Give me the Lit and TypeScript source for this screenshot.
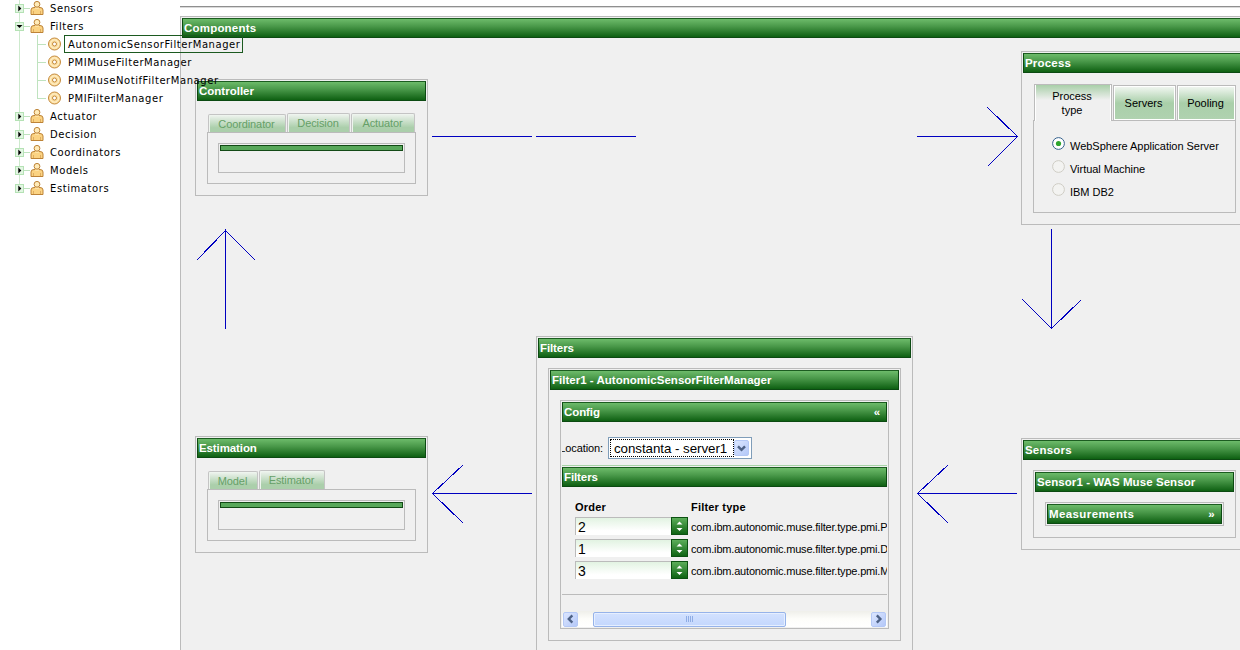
import { LitElement, html, css, svg, nothing } from "lit";
import { customElement, property } from "lit/decorators.js";
import { classMap } from "lit/directives/class-map.js";

const chevron = (dir: string) => {
  const d: Record<string, string> = {
    down: "M3.2 5.2 L7 9 L10.8 5.2",
    left: "M9 3.2 L5.2 7 L9 10.8",
    right: "M5.2 3.2 L9 7 L5.2 10.8",
  };
  return html`<svg width="14" height="14" viewBox="0 0 14 14"><path d=${d[dir]} fill="none" stroke="#4d6185" stroke-width="2.6"/></svg>`;
};

const person = html`<svg class="icon" width="14" height="16" viewBox="0 0 14 16">
  <path d="M1 14.5 V10 Q1 7.5 4 7.5 H10 Q13 7.5 13 10 V14.5 Z" fill="#fbd383" stroke="#bd8337"/>
  <path d="M3.5 14 V11 M10.5 14 V11" stroke="#e0ad60"/>
  <path d="M5.2 6.5 H8.8 V9 H5.2 Z" fill="#ffe4a6"/>
  <circle cx="7" cy="4.3" r="2.9" fill="#ffebb9" stroke="#bd8337"/>
</svg>`;

const ring = html`<svg class="icon" width="14" height="14" viewBox="0 0 14 14">
  <circle cx="7" cy="7" r="6" fill="#fde0a2" stroke="#c48a3c"/>
  <circle cx="7" cy="7" r="4.2" fill="none" stroke="#fff0cc"/>
  <circle cx="7" cy="7" r="2" fill="#fff" stroke="#c48a3c"/>
</svg>`;

@customElement("ui-panel")
export class UiPanel extends LitElement {
  @property() heading = "";
  @property() mark = "";
  static styles = css`
    :host { display: flex; flex-direction: column; box-sizing: border-box; border: 1px solid #bbb; padding: 1px; background: #f0f0f0; }
    .head {
      display: flex; align-items: center; justify-content: space-between; flex: none;
      box-sizing: border-box; height: 20px; padding: 0 6px 0 1px;
      border: 1px solid #0c4a12; border-top-color: #1c5c20;
      background: linear-gradient(#6dbb6a, #4a994a 40%, #0e6012);
      color: #fff; font: bold 11.5px/18px "Liberation Sans", Arial, sans-serif; white-space: nowrap;
      letter-spacing: var(--head-spacing, -0.1px);
    }
    .body { flex: 1; min-height: 0; display: flex; flex-direction: column; padding: var(--body-pad, 10px); }
  `;
  render() {
    return html`<div class="head"><span>${this.heading}</span>${this.mark ? html`<span>${this.mark}</span>` : nothing}</div>
      <div class="body"><slot></slot></div>`;
  }
}

@customElement("ui-tabs")
export class UiTabs extends LitElement {
  @property({ attribute: false }) tabs: { label: string; width: number }[] = [];
  static styles = css`
    :host { display: flex; flex-direction: column; flex: 1; font: 11px/13px "Liberation Sans", Arial, sans-serif; }
    .strip { display: flex; align-items: flex-end; gap: 1px; padding-left: 1px; height: 21px; }
    .tab {
      box-sizing: border-box; height: 19px; border: 1px solid #c4c4c4; border-bottom: 0; border-radius: 2px 2px 0 0;
      background: linear-gradient(#f0f4f0, #abcfab 75%); box-shadow: inset 1px 1px #eef4ee;
      text-align: center; color: #65a067; line-height: 18px; letter-spacing: -0.1px; padding-right: 1px;
    }
    .tab.first { height: 18px; }
    .page { flex: 1; border: 1px solid #bbb; padding: 10px; }
    .box { border: 1px solid #bbb; padding: 1px; height: 26px; }
    .bar { height: 4px; border: 1px solid #134a16; background: #58a85a; }
  `;
  render() {
    return html`<div class="strip">
        ${this.tabs.map((t, i) => html`<div class=${classMap({ tab: true, first: i === 0 })} style="width:${t.width}px">${t.label}</div>`)}
      </div>
      <div class="page"><div class="box"><div class="bar"></div></div></div>`;
  }
}

@customElement("process-tabs")
export class ProcessTabs extends LitElement {
  static styles = css`
    :host { display: flex; flex-direction: column; flex: 1; font: 11px/14px "Liberation Sans", Arial, sans-serif; color: #000; }
    .strip { display: flex; align-items: flex-end; height: 37px; padding-left: 1px; }
    .tab {
      display: flex; align-items: center; justify-content: center; text-align: center; box-sizing: border-box;
      height: 35px; border: 1px solid #bbb; border-bottom: 0; box-shadow: inset 0 0 0 1px #fff; padding-right: 2px;
      background: linear-gradient(#f4f8f4, #a9cfa9 50%, #b0d2b0);
    }
    .on {
      width: 78px; height: 37px; margin: 0 1px -1px 0; padding: 0 18px 1px 16px; z-index: 1; box-shadow: inset 1px 0 #fff, inset -1px 0 #fff;
      background: linear-gradient(#a9cfa9, #f0f0f0 42%);
    }
    .servers { width: 63px; margin-right: 1px; }
    .pooling { width: 59px; }
    .page { flex: 1; border: 1px solid #bbb; padding: 11px 18px 0; display: flex; flex-direction: column; }
    label { display: flex; align-items: center; gap: 5px; height: 23px; white-space: nowrap; letter-spacing: -0.03px; }
    label span { padding-top: 4px; }
    label svg { flex: none; }
  `;
  render() {
    const opts = ["WebSphere Application Server", "Virtual Machine", "IBM DB2"];
    return html`<div class="strip">
        <div class="tab on">Process type</div><div class="tab servers">Servers</div><div class="tab pooling">Pooling</div>
      </div>
      <div class="page">${opts.map((o, i) => html`<label>
        <svg width="13" height="13" viewBox="0 0 13 13">
          <circle cx="6.5" cy="6.5" r="5.9" fill=${i ? "#f3f3f1" : "#fff"} stroke=${i ? "#cfcdc5" : "#33608c"}/>
          ${i ? nothing : svg`<circle cx="6.5" cy="6.5" r="2.6" fill="#2fa52f"/>`}
        </svg><span>${o}</span></label>`)}</div>`;
  }
}

@customElement("filter-config")
export class FilterConfig extends LitElement {
  static styles = css`
    :host { display: flex; flex-direction: column; flex: 1; overflow: hidden; font: 11px/14px "Liberation Sans", Arial, sans-serif; color: #000; }
    .location { display: flex; align-items: center; height: 22px; margin-top: 15px; }
    .name { width: 46px; display: flex; justify-content: flex-end; box-sizing: border-box; padding-right: 5px; }
    .clip { display: flex; justify-content: flex-end; overflow: hidden; width: 41px; }
    .clip span { flex: none; letter-spacing: -0.1px; }
    .select { display: flex; align-items: center; box-sizing: border-box; width: 144px; height: 22px; border: 1px solid #7f9db9; background: #fff; padding: 1px; }
    .value { box-sizing: border-box; width: 124px; height: 18px; border: 1px dotted #000; padding-left: 3px; font-size: 13.33px; line-height: 17px; white-space: nowrap; letter-spacing: -0.05px; }
    .drop, .btn { display: flex; align-items: center; justify-content: center; box-sizing: border-box; border: 1px solid #b4c8f6; background: linear-gradient(135deg, #dbe6ff, #b4c8f8); border-radius: 2px; }
    .drop { width: 15px; height: 16px; }
    .sub { border: 0; border-top: 1px solid #a8d4a8; padding: 1px 0 0; margin-top: 6px; height: 130px; border-bottom: 1px solid #bbb; flex: none; box-sizing: border-box; --body-pad: 11px 0 0 13px; }
    .grid { display: grid; grid-template-columns: 116px 1fr; }
    .th { font-weight: bold; height: 19px; line-height: 18px; letter-spacing: 0.2px; }
    .row { height: 22px; display: flex; align-items: flex-start; white-space: nowrap; line-height: 21px; }
    .ctype { letter-spacing: -0.18px; overflow: hidden; }
    .input { box-sizing: border-box; width: 96px; height: 18px; border: 1px solid #bbb; border-right: 0; border-bottom: 0; background: linear-gradient(#e2f3e2, #fff 75%); padding-left: 2px; font-size: 14px; line-height: 18px; }
    .spin { box-sizing: border-box; width: 17px; height: 18px; border: 1px solid #0c5212; background: linear-gradient(#5cae5a, #0e6413); }
    .spin svg { display: block; }
    .scroll { display: flex; align-items: center; height: 17px; margin-top: 16px; background: linear-gradient(#efefea, #fdfdfa 50%, #fff); padding: 0 1px; }
    .btn { width: 15px; height: 15px; }
    .thumb { box-sizing: border-box; width: 193px; height: 15px; border: 1px solid #96b3ea; box-shadow: inset 0 0 0 1px #e6efff; background: linear-gradient(#d3e2ff, #c4d7fd); border-radius: 2px; margin: 0 85px 0 15px; display: flex; align-items: center; justify-content: center; gap: 1px; }
    .thumb i { width: 1px; height: 6px; background: #8fade5; }
  `;
  render() {
    const rows = [["2", "P"], ["1", "D"], ["3", "M"]];
    return html`
      <div class="location">
        <div class="name"><div class="clip"><span>Location:</span></div></div>
        <div class="select"><div class="value">constanta - server1</div><div class="drop">${chevron("down")}</div></div>
      </div>
      <ui-panel class="sub" heading="Filters"><div class="grid">
        <div class="th">Order</div><div class="th">Filter type</div>
        ${rows.map(([n, s]) => html`
          <div class="row"><div class="input">${n}</div><div class="spin">
            <svg width="15" height="16" viewBox="0 0 15 16"><path d="M4.5 6.5 L7.5 3.5 L10.5 6.5 Z M4.5 10 L7.5 13 L10.5 10 Z" fill="#fff"/></svg></div></div>
          <div class="row ctype">com.ibm.autonomic.muse.filter.type.pmi.${s}</div>`)}
      </div></ui-panel>
      <div class="scroll"><div class="btn">${chevron("left")}</div><div class="thumb"><i></i><i></i><i></i><i></i></div><div class="btn">${chevron("right")}</div></div>`;
  }
}

@customElement("nav-tree")
export class NavTree extends LitElement {
  static styles = css`
    :host { display: block; font: 10px/18px "DejaVu Sans", Verdana, sans-serif; color: #000; letter-spacing: 0.57px; }
    .rail { position: absolute; left: 19px; top: 0; height: 188px; border-left: 1px solid #cdeacd; }
    .tree { display: flex; flex-direction: column; margin-top: -1px; }
    .row { display: flex; align-items: center; height: 18px; padding-left: 15px; white-space: nowrap; position: relative; }
    .toggle { flex: none; }
    .stub { flex: none; width: 6px; height: 1px; background: #bfe3bf; }
    .icon { flex: none; display: block; }
    .label { margin-left: 6px; line-height: 16px; padding-top: 2px; }
    .kids { margin-left: 37px; position: relative; }
    .kids::before { content: ""; position: absolute; left: 0; top: 0; height: 63px; border-left: 1px solid #bfe3bf; }
    .kids .row { padding-left: 0; }
    .kids .stub { width: 9px; margin-right: 1px; }
    .kids .icon { width: 15px; }
    .kids .label { margin-left: 2px; line-height: 14px; padding: 2px 1px 0 3px; border: 1px solid transparent; }
    .kids .label.sel { border-color: #1c5a20; }
  `;
  private item(label: string, open = false) {
    return html`<div class="row">
      <svg class="toggle" width="9" height="9" viewBox="0 0 9 9"><rect x=".5" y=".5" width="8" height="8" fill="#e2f6e2" stroke="#b5e2b5"/>
        <path d=${open ? "M1.5 3 H7.5 L4.5 6 Z" : "M3.3 1.5 V7.5 L6.3 4.5 Z"} fill="#000"/></svg>
      <span class="stub"></span>${person}<span class="label">${label}</span></div>`;
  }
  render() {
    const kids = ["AutonomicSensorFilterManager", "PMIMuseFilterManager", "PMIMuseNotifFilterManager", "PMIFilterManager"];
    return html`<div class="rail"></div><div class="tree">
      ${this.item("Sensors")}${this.item("Filters", true)}
      <div class="kids">${kids.map((k, i) => html`<div class="row"><span class="stub"></span>${ring}<span class=${classMap({ label: true, sel: i === 0 })}>${k}</span></div>`)}</div>
      ${["Actuator", "Decision", "Coordinators", "Models", "Estimators"].map((l) => this.item(l))}
    </div>`;
  }
}

@customElement("app-root")
export class AppRoot extends LitElement {
  static styles = css`
    :host { display: grid; grid-template-columns: 180px 1060px; width: 1240px; height: 650px; overflow: hidden; background: #fff; position: relative; }
    nav-tree { position: relative; z-index: 2; width: 180px; }
    .main { display: flex; flex-direction: column; min-width: 0; }
    .rule { height: 1px; margin: 6px 0 8px; background: #8f8f8f; border-bottom: 1px solid #dadada; }
    .components { flex: none; width: 1080px; height: 660px; --body-pad: 0; --head-spacing: 0.2px; }
    .wires { position: absolute; left: 0; top: 0; z-index: 1; pointer-events: none; }
    .node { position: absolute; }
    .controller { left: 195px; top: 79px; width: 233px; height: 117px; --head-spacing: 0px; }
    .estimation { left: 195px; top: 436px; width: 233px; height: 117px; }
    .process { left: 1021px; top: 51px; width: 227px; height: 174px; --head-spacing: 0.2px; }
    .sensors { left: 1021px; top: 438px; width: 227px; height: 112px; --head-spacing: 0.2px; }
    .filters { left: 536px; top: 336px; width: 377px; height: 340px; }
    .filter1 { height: 273px; --head-spacing: 0.02px; }
    .config { height: 229px; --body-pad: 0; --head-spacing: -0.1px; }
    .sensor1 { height: 68px; --head-spacing: 0.07px; }
    .measure { height: 24px; --head-spacing: 0.4px; --body-pad: 0; }
  `;
  render() {
    return html`
      <nav-tree></nav-tree>
      <div class="main"><div class="rule"></div><ui-panel class="components" heading="Components"></ui-panel></div>
      <svg class="wires" width="1240" height="650" viewBox="0 0 1240 650" fill="none" stroke="#0000c0" shape-rendering="crispEdges">
        <path d="M432 136.5H532M536 136.5H636M917 136.5H1017M987.5 107.5L1017.5 136.5L987.5 166.5"/>
        <path d="M1051.5 229V329M1022.5 299.5L1051.5 328.5L1081.5 299.5"/>
        <path d="M225.5 229V329M196.5 260.5L225.5 230.5L255.5 260.5"/>
        <path d="M432 493.5H532M463.5 464.5L432.5 493.5L463.5 523.5"/>
        <path d="M917 493.5H1017M948.5 464.5L917.5 493.5L948.5 523.5"/>
      </svg>
      <ui-panel class="node controller" heading="Controller">
        <ui-tabs .tabs=${[{ label: "Coordinator", width: 78 }, { label: "Decision", width: 63 }, { label: "Actuator", width: 64 }]}></ui-tabs>
      </ui-panel>
      <ui-panel class="node estimation" heading="Estimation">
        <ui-tabs .tabs=${[{ label: "Model", width: 50 }, { label: "Estimator", width: 66 }]}></ui-tabs>
      </ui-panel>
      <ui-panel class="node process" heading="Process"><process-tabs></process-tabs></ui-panel>
      <ui-panel class="node filters" heading="Filters">
        <ui-panel class="filter1" heading="Filter1 - AutonomicSensorFilterManager">
          <ui-panel class="config" heading="Config" mark="«"><filter-config></filter-config></ui-panel>
        </ui-panel>
      </ui-panel>
      <ui-panel class="node sensors" heading="Sensors">
        <ui-panel class="sensor1" heading="Sensor1 - WAS Muse Sensor"><ui-panel class="measure" heading="Measurements" mark="»"></ui-panel></ui-panel>
      </ui-panel>`;
  }
}
